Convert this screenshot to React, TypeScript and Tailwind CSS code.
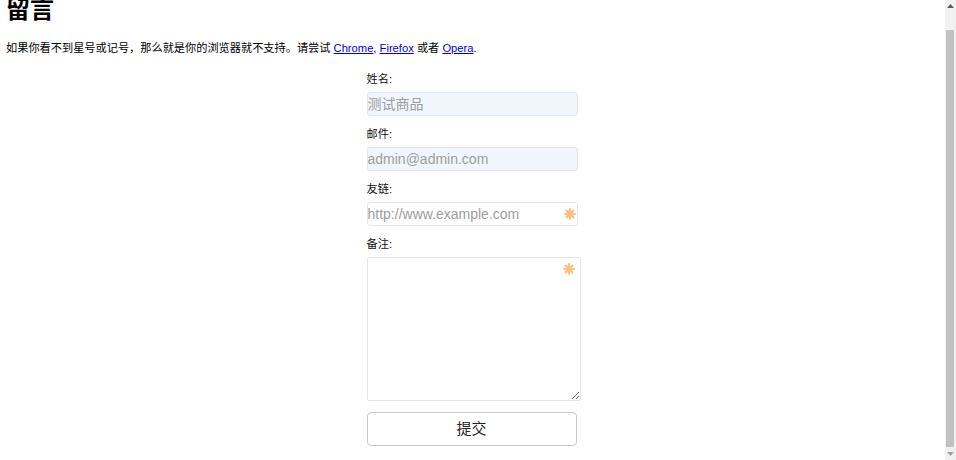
import React, { useLayoutEffect, useEffect, useRef } from "react";

function Star() {
  return (
    <svg width="12" height="12" viewBox="0 0 12 12" className="pointer-events-none">
      <g stroke="#f7c27c" strokeWidth="2.2" strokeLinecap="round">
        <line x1="6" y1="1.2" x2="6" y2="10.8" />
        <line x1="1.2" y1="6" x2="10.8" y2="6" />
        <line x1="2.6" y1="2.6" x2="9.4" y2="9.4" />
        <line x1="9.4" y1="2.6" x2="2.6" y2="9.4" />
      </g>
    </svg>
  );
}

function Field({
  label,
  placeholder,
  filled,
  star,
}: {
  label: string;
  placeholder: string;
  filled?: boolean;
  star?: boolean;
}) {
  return (
    <div className="flex flex-col">
      <label className="text-[11.2px] leading-[16px] text-[#111]">{label}</label>
      <div className="relative mt-[5px] w-[211px]">
        <input
          placeholder={placeholder}
          className={
            "block h-[24px] w-full rounded-[3px] border border-[#e4e6ea] px-0 text-[14px] leading-[22px] text-[#333] outline-none placeholder:text-[#9d9d9d] " +
            (filled ? "bg-[#f1f6fd]" : "bg-white")
          }
        />
        {star && (
          <span className="absolute right-[2px] top-[6px] flex">
            <Star />
          </span>
        )}
      </div>
    </div>
  );
}

function FakeScrollbar() {
  return (
    <div className="flex w-[11px] shrink-0 flex-col bg-[#f1f1f1]">
      <div className="flex h-[12px] items-center justify-center">
        <svg width="7" height="4" viewBox="0 0 7 4">
          <polygon points="3.5,0 7,4 0,4" fill="#5a5a5a" />
        </svg>
      </div>
      <div className="flex flex-1 flex-col pt-[18px] pl-[1px] pr-[2px]">
        <div className="h-[417px] bg-[#c1c1c1]" />
      </div>
      <div className="flex h-[12px] items-center justify-center">
        <svg width="7" height="4" viewBox="0 0 7 4">
          <polygon points="0,0 7,0 3.5,4" fill="#a3a3a3" />
        </svg>
      </div>
    </div>
  );
}

export default function App() {
  const ref = useRef<HTMLDivElement>(null);
  useLayoutEffect(() => {
    if (ref.current) ref.current.scrollTop = ref.current.scrollHeight;
  }, []);
  useEffect(() => {
    const t = setTimeout(() => {
      if (ref.current) ref.current.scrollTop = ref.current.scrollHeight;
    }, 0);
    return () => clearTimeout(t);
  }, []);

  return (
    <div className="flex h-screen bg-white font-['Liberation_Sans','Noto_Sans_CJK_SC',sans-serif] text-black">
      <div
        ref={ref}
        className="min-w-0 flex-1 overflow-y-scroll [scrollbar-width:none] [&::-webkit-scrollbar]:hidden"
      >
        <div className="px-[6px]">
          <h1 className="mt-[16px] text-[24px] font-bold leading-[28px]">留言</h1>
          <p className="mt-[16px] text-[11.2px] leading-[16px]">
            如果你看不到星号或记号，那么就是你的浏览器就不支持。请尝试{" "}
            <a href="#" className="text-[#0000ee] underline">Chrome</a>,{" "}
            <a href="#" className="text-[#0000ee] underline">Firefox</a> 或者{" "}
            <a href="#" className="text-[#0000ee] underline">Opera</a>.
          </p>
        </div>
        <form
          className="mx-auto mt-[15px] flex w-[214px] translate-x-[1px] flex-col gap-[10px] pb-[14px]"
          onSubmit={(e) => e.preventDefault()}
        >
          <Field label="姓名:" placeholder="测试商品" filled />
          <Field label="邮件:" placeholder="admin@admin.com" filled />
          <Field label="友链:" placeholder="http://www.example.com" star />
          <div className="flex flex-col">
            <label className="text-[11.2px] leading-[16px] text-[#111]">备注:</label>
            <div className="relative mt-[5px]">
              <textarea className="block h-[144px] w-[214px] rounded-[2px] border border-[#e4e6ea] bg-white text-[14px] outline-none" />
              <span className="absolute right-[6px] top-[6px] flex">
                <Star />
              </span>
            </div>
          </div>
          <button
            type="submit"
            className="mt-px h-[34px] w-[210px] rounded-[4px] border border-[#c9c9c9] bg-white text-[15px] text-[#222]"
          >
            提交
          </button>
        </form>
      </div>
      <FakeScrollbar />
    </div>
  );
}
